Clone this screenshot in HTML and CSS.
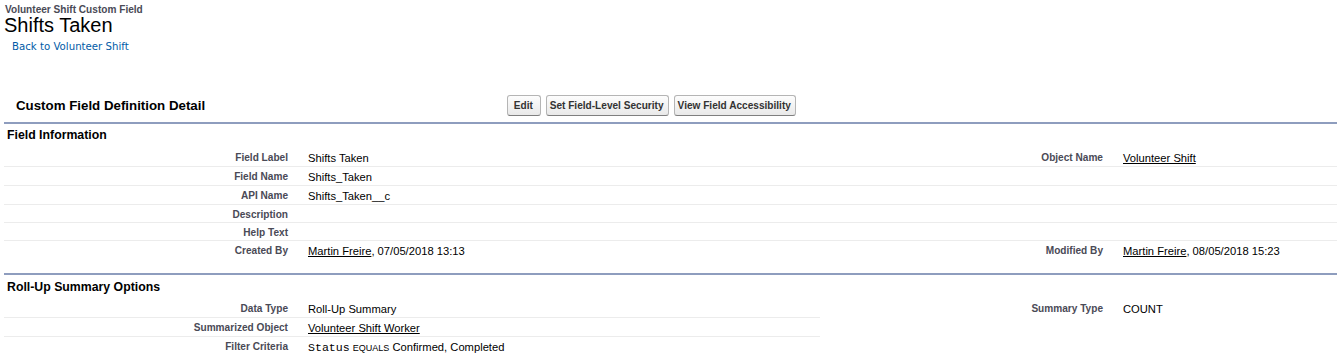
FILE: index.html
```html
<!DOCTYPE html>
<html lang="en">
<head>
<meta charset="utf-8">
<title>Shifts Taken</title>
<link rel="stylesheet" href="styles.css">
</head>
<body>
<div class="page">
  <div class="page-title">
    <div class="page-type">Volunteer Shift Custom Field</div>
    <h1 class="page-desc">Shifts Taken</h1>
    <div class="breadcrumb"><a href="#">Back to Volunteer Shift</a></div>
  </div>

  <div class="block">
    <div class="block-header">
      <h2 class="block-title">Custom Field Definition Detail</h2>
      <div class="buttons">
        <button class="btn" type="button"> Edit </button>
        <button class="btn" type="button">Set Field-Level Security</button>
        <button class="btn" type="button">View Field Accessibility</button>
      </div>
    </div>

    <div class="section">
      <h3 class="section-title">Field Information</h3>
      <table class="detail">
        <colgroup><col class="c-label"><col class="c-data"><col class="c-label2"><col></colgroup>
        <tr>
          <th>Field Label</th><td>Shifts Taken</td>
          <th>Object Name</th><td><a href="#">Volunteer Shift</a></td>
        </tr>
        <tr>
          <th>Field Name</th><td>Shifts_Taken</td><th></th><td></td>
        </tr>
        <tr>
          <th>API Name</th><td>Shifts_Taken__c</td><th></th><td></td>
        </tr>
        <tr>
          <th>Description</th><td></td><th></th><td></td>
        </tr>
        <tr>
          <th>Help Text</th><td></td><th></th><td></td>
        </tr>
        <tr class="last">
          <th>Created By</th><td><a href="#">Martin Freire</a>, 07/05/2018 13:13</td>
          <th>Modified By</th><td><a href="#">Martin Freire</a>, 08/05/2018 15:23</td>
        </tr>
      </table>
    </div>

    <div class="section section-2">
      <h3 class="section-title">Roll-Up Summary Options</h3>
      <table class="detail">
        <colgroup><col class="c-label"><col class="c-data"><col class="c-label2"><col></colgroup>
        <tr>
          <th>Data Type</th><td>Roll-Up Summary</td>
          <th class="nb">Summary Type</th><td class="nb">COUNT</td>
        </tr>
        <tr>
          <th>Summarized Object</th><td><a href="#">Volunteer Shift Worker</a></td>
          <th class="nb"></th><td class="nb"></td>
        </tr>
        <tr class="last">
          <th>Filter Criteria</th><td><span class="mono">Status</span> <span class="op">EQUALS</span> Confirmed, Completed</td>
          <th></th><td></td>
        </tr>
      </table>
    </div>
  </div>
</div>
</body>
</html>
```

FILE: styles.css
```css
* { box-sizing: border-box; }

html, body {
  margin: 0;
  padding: 0;
  background: #fff;
}

body {
  font-family: "Liberation Sans", Arial, sans-serif;
  color: #000;
}

.page {
  padding: 3px 0 0 4px;
}

.page-type {
  font-size: 10.1px;
  line-height: 12px;
  font-weight: bold;
  color: #4a4a56;
  padding: 1px 0 0 1px;
}

.page-desc {
  margin: -1px 0 0;
  font-size: 20px;
  line-height: 20px;
  font-weight: normal;
  color: #000;
}

.breadcrumb {
  margin-top: 5px;
  padding-left: 8px;
  font-family: "DejaVu Sans", Verdana, sans-serif;
  font-size: 10.2px;
  line-height: 13px;
}

.breadcrumb a {
  color: #015ba7;
  text-decoration: none;
}

.block {
  margin-top: 39px;
}

.block-header {
  display: grid;
  grid-template-columns: 503px auto;
  align-items: center;
  padding: 3px 0 6px;
}

.block-title {
  margin: 0;
  padding-left: 12px;
  font-size: 13.3px;
  line-height: 16px;
  font-weight: bold;
  color: #000;
}

.buttons {
  display: flex;
  gap: 5px;
}

.btn {
  white-space: pre;
  font-family: "Liberation Sans", Arial, sans-serif;
  font-size: 10.1px;
  line-height: 13px;
  font-weight: bold;
  color: #333;
  margin: 0;
  padding: 3px 4px 3px 3px;
  border: 1px solid #b5b5b5;
  border-bottom-color: #7f7f7f;
  border-radius: 3px;
  background: linear-gradient(#fdfdfd, #e9e9e9);
  cursor: pointer;
}

.section {
  border-top: 2px solid #8e9dbe;
}

.section-2 {
  margin-top: 14px;
}

.section-title {
  margin: 0 0 1px;
  padding: 4px 3px 5px;
  font-size: 12.3px;
  line-height: 14px;
  font-weight: bold;
  color: #000;
}

.section-2 .section-title {
  padding: 5px 3px 4px;
}

.detail {
  width: 1333px;
  table-layout: fixed;
  border-collapse: collapse;
  border-spacing: 0;
}

.c-label { width: 294px; }
.c-data { width: 522px; }
.c-label2 { width: 293px; }

.detail th,
.detail td {
  vertical-align: top;
  border-bottom: 1px solid #ececec;
}

.detail th {
  text-align: right;
  font-size: 10.1px;
  line-height: 13px;
  font-weight: bold;
  color: #4a4a56;
  padding: 3px 10px 1px 2px;
}

.detail td {
  text-align: left;
  font-size: 11.2px;
  line-height: 14px;
  color: #000;
  padding: 3px 2px 1px 10px;
}

.detail tr.last th,
.detail tr.last td,
.detail th.nb,
.detail td.nb {
  border-bottom: none;
}

.detail a {
  color: #000;
  text-decoration: underline;
}

.mono {
  font-family: "Liberation Mono", "Courier New", monospace;
  font-size: 11.6px;
}

.op {
  font-size: 9px;
}
```
